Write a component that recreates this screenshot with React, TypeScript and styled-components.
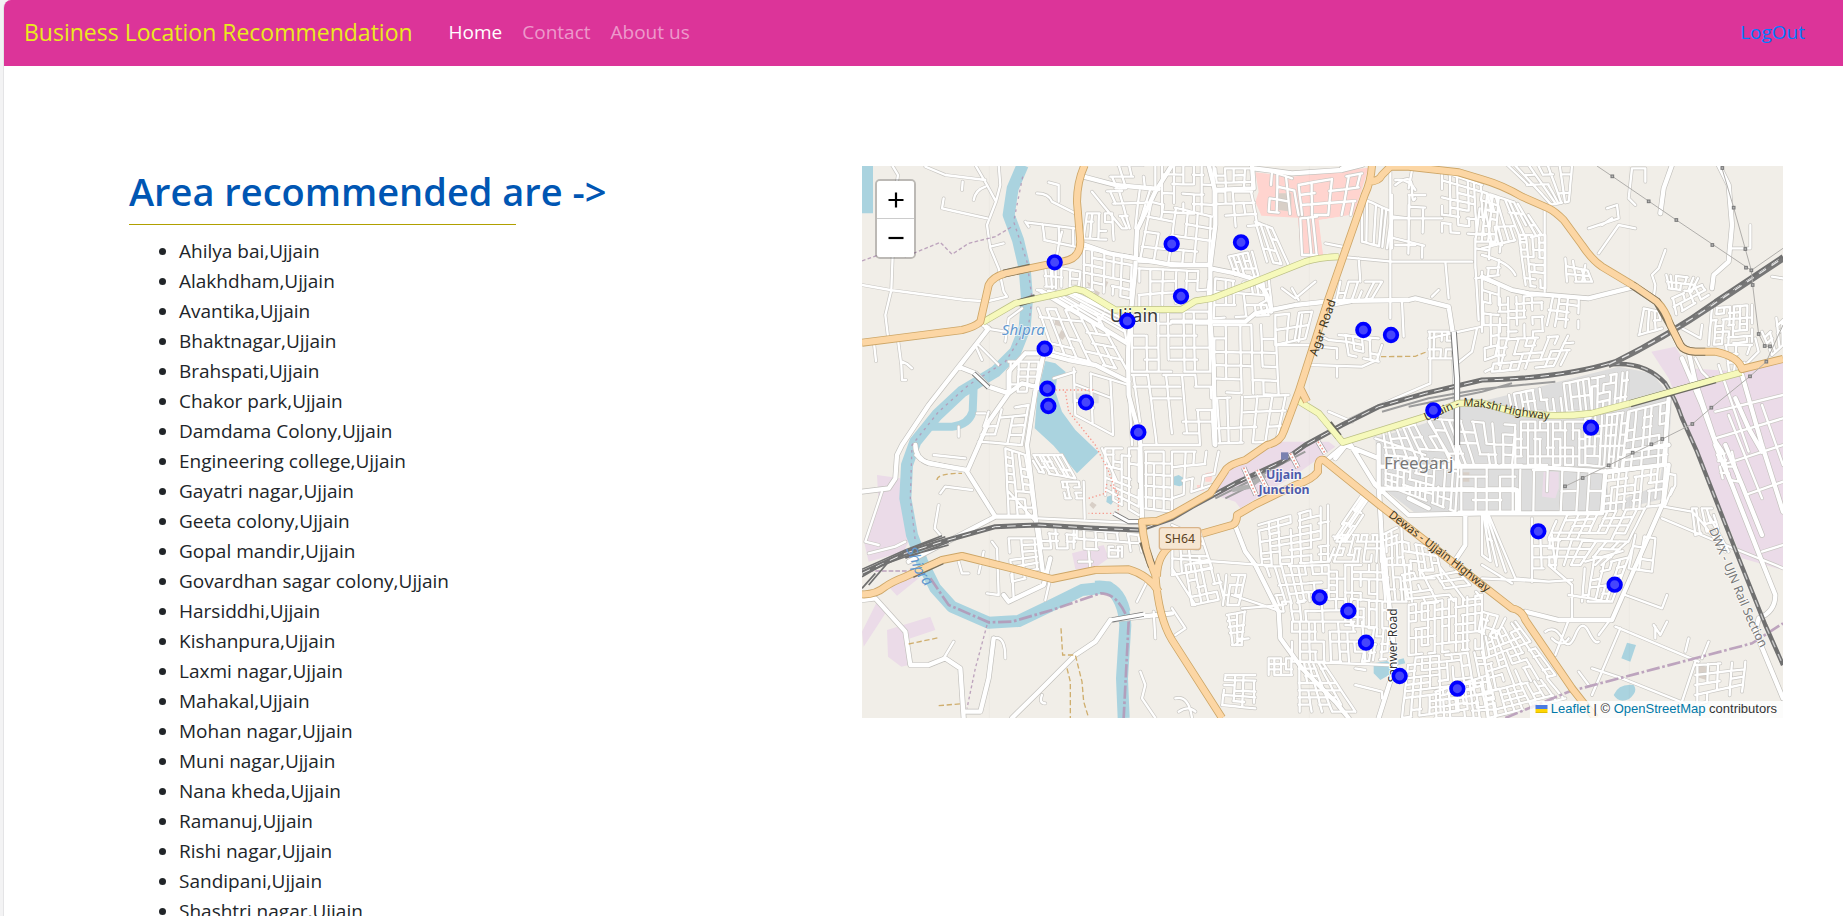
import React from "react";
import styled, { createGlobalStyle } from "styled-components";

const GlobalStyle = createGlobalStyle`
  *, *::before, *::after { box-sizing: border-box; }
  html { scrollbar-width: none; }
  body {
    margin: 0;
    background: #f3f3f4;
    color: #212529;
    font-family: "Open Sans", "Noto Sans", sans-serif;
    font-size: 19px;
    line-height: 30px;
  }
`;

const Page = styled.div`
  min-height: 100vh;
  margin-left: 3px;
  border-left: 1px solid #e4e4e6;
  border-top-left-radius: 8px;
  overflow: hidden;
  background: #fff;
`;

const Navbar = styled.nav`
  display: flex;
  align-items: center;
  min-height: 66px;
  padding: 0 38px 2px 20px;
  background: #dc3499;
`;

const Brand = styled.a`
  margin-right: 36px;
  color: #eaea1c;
  font-size: 23px;
  text-decoration: none;
  white-space: nowrap;
`;

const NavList = styled.ul`
  display: flex;
  flex: 1;
  gap: 20px;
  margin: 0;
  padding: 0;
  list-style: none;
`;

const NavLink = styled.a<{ $active?: boolean }>`
  color: ${(p) => (p.$active ? "#fff" : "rgba(255, 255, 255, 0.5)")};
  text-decoration: none;
  white-space: nowrap;
`;

const LogOut = styled.a`
  color: #007bff;
  text-decoration: none;
`;

const Content = styled.main`
  display: grid;
  grid-template-columns: 733fr 921fr;
  align-items: start;
  padding: 100px 60px 0 125px;
`;

const Title = styled.h1`
  margin: 0 0 8px;
  color: #0056b3;
  font-size: 38px;
  font-weight: 600;
  line-height: 50px;
`;

const Rule = styled.hr`
  width: 387px;
  max-width: 100%;
  height: 1px;
  margin: 0 0 11px;
  border: 0;
  background: #b0a000;
`;

const AreaList = styled.ul`
  margin: 0 0 20px;
  padding-left: 50px;
`;

const MapFrame = styled.section`
  position: relative;
  height: 552px;
  overflow: hidden;
  background: #f1eee8;
`;

const MapDrawing = styled.svg`
  display: block;
  width: 100%;
  height: 100%;
  font-family: "Noto Sans", "Open Sans", sans-serif;
`;

const ZoomControl = styled.div`
  position: absolute;
  top: 13px;
  left: 13px;
  display: flex;
  flex-direction: column;
  border: 2px solid rgba(0, 0, 0, 0.22);
  border-radius: 5px;
  background-clip: padding-box;
`;

const ZoomButton = styled.button`
  display: grid;
  place-items: center;
  width: 37px;
  height: 38px;
  padding: 0;
  border: 0;
  background: #fff;
  color: #000;
  &:first-child { border-bottom: 1px solid #ccc; border-radius: 3px 3px 0 0; }
  &:last-child { border-radius: 0 0 3px 3px; }
`;

const Attribution = styled.div`
  position: absolute;
  right: 0;
  bottom: 0;
  display: flex;
  align-items: center;
  gap: 3px;
  padding: 0 6px 1px 5px;
  background: rgba(255, 255, 255, 0.8);
  color: #333;
  font-family: "Liberation Sans", Arial, sans-serif;
  font-size: 13px;
  line-height: 16px;
  white-space: nowrap;
  a { color: #0078a8; text-decoration: none; }
`;

const areas = [
  "Ahilya bai", "Alakhdham", "Avantika", "Bhaktnagar", "Brahspati", "Chakor park",
  "Damdama Colony", "Engineering college", "Gayatri nagar", "Geeta colony",
  "Gopal mandir", "Govardhan sagar colony", "Harsiddhi", "Kishanpura",
  "Laxmi nagar", "Mahakal", "Mohan nagar", "Muni nagar", "Nana kheda",
  "Ramanuj", "Rishi nagar", "Sandipani", "Shashtri nagar",
];

const pins: [number, number][] = [
  [577, 291], [795, 467], [547, 550], [555, 670], [558, 722], [671, 711],
  [828, 801], [928, 236], [1136, 231], [956, 393], [1503, 494], [1586, 509],
  [1713, 735], [2186, 787], [1372, 1296], [1458, 1337], [1511, 1432],
  [1612, 1532], [1785, 1570], [2028, 1098], [2257, 1258],
];

/* A city block: four corners in order, then the number of streets each way. */
type Block = [number, number, number, number, number, number, number, number, number, number];

const blocks: Block[] = [
  [492, 172, 640, 190, 640, 245, 500, 215, 3, 1],
  [675, 145, 750, 145, 755, 225, 665, 220, 4, 3],
  [665, 250, 810, 275, 805, 400, 665, 370, 5, 5],
  [545, 300, 655, 320, 650, 365, 550, 365, 4, 2],
  [525, 375, 640, 385, 780, 450, 795, 540, 7, 3],
  [525, 430, 700, 440, 800, 620, 570, 560, 6, 5],
  [635, 610, 800, 660, 810, 840, 640, 750, 3, 3],
  [440, 590, 530, 590, 520, 680, 440, 680, 3, 4],
  [380, 740, 500, 720, 480, 840, 350, 830, 3, 4],
  [730, 0, 880, 0, 880, 70, 760, 70, 4, 2],
  [690, 80, 870, 75, 830, 190, 780, 190, 4, 3],
  [865, 110, 1050, 155, 1045, 300, 830, 290, 5, 4],
  [900, 0, 1055, 0, 1055, 150, 900, 140, 5, 5],
  [830, 310, 1045, 320, 1040, 400, 830, 430, 6, 3],
  [810, 440, 1040, 440, 1045, 620, 810, 620, 6, 5],
  [810, 630, 1045, 630, 1055, 840, 840, 840, 5, 6],
  [1060, 10, 1175, 10, 1170, 70, 1065, 75, 4, 3],
  [1060, 80, 1170, 80, 1190, 180, 1060, 190, 4, 3],
  [1100, 275, 1170, 260, 1190, 335, 1120, 330, 5, 3],
  [1060, 340, 1200, 360, 1220, 450, 1055, 460, 5, 3],
  [1180, 350, 1220, 340, 1230, 430, 1200, 450, 2, 3],
  [1055, 480, 1240, 480, 1250, 690, 1055, 680, 5, 5],
  [1060, 700, 1280, 690, 1250, 830, 1070, 835, 5, 3],
  [1180, 170, 1230, 190, 1280, 300, 1215, 290, 3, 3],
  [1240, 450, 1350, 440, 1330, 520, 1240, 540, 3, 2],
  [1230, 20, 1290, 40, 1310, 150, 1220, 140, 3, 3],
  [1310, 60, 1500, 25, 1470, 150, 1320, 150, 4, 3],
  [1315, 160, 1365, 155, 1380, 270, 1320, 270, 4, 1],
  [1500, 100, 1590, 140, 1575, 250, 1500, 230, 6, 1],
  [1590, 90, 1690, 90, 1685, 280, 1590, 250, 2, 5],
  [1740, 20, 1860, 60, 1870, 210, 1740, 200, 5, 7],
  [1860, 80, 1910, 100, 1900, 230, 1840, 230, 3, 6],
  [1435, 350, 1560, 350, 1530, 400, 1420, 420, 5, 2],
  [1450, 510, 1550, 530, 1550, 590, 1460, 570, 4, 3],
  [1700, 500, 1780, 500, 1770, 580, 1700, 580, 4, 3],
  [1840, 220, 1920, 240, 1910, 330, 1840, 340, 2, 4],
  [1860, 80, 1980, 120, 2040, 210, 1890, 240, 9, 3],
  [1930, 0, 2130, 0, 2120, 110, 2060, 120, 6, 4],
  [1970, 210, 2050, 210, 2050, 370, 1990, 360, 4, 7],
  [1860, 340, 1910, 360, 1910, 600, 1870, 620, 2, 8],
  [1910, 400, 2040, 390, 2045, 520, 1910, 520, 5, 6],
  [1910, 525, 2145, 510, 2100, 600, 1890, 620, 8, 4],
  [2070, 390, 2150, 400, 2150, 490, 2050, 480, 3, 4],
  [2110, 280, 2170, 300, 2190, 350, 2115, 350, 3, 3],
  [2410, 330, 2510, 340, 2490, 380, 2420, 370, 6, 2],
  [2430, 400, 2520, 360, 2540, 390, 2440, 450, 5, 2],
  [2345, 430, 2390, 440, 2400, 490, 2330, 510, 3, 2],
  [2550, 430, 2670, 420, 2670, 530, 2540, 540, 7, 6],
  [2590, 540, 2670, 540, 2640, 620, 2600, 620, 2, 3],
  [2700, 500, 2763, 440, 2763, 540, 2730, 570, 3, 4],
  [1940, 690, 2180, 640, 2190, 740, 1950, 740, 13, 2],
  [2190, 640, 2300, 620, 2290, 720, 2190, 740, 6, 4],
  [1960, 770, 2170, 770, 2170, 900, 1960, 900, 11, 5],
  [2170, 760, 2300, 740, 2280, 910, 2170, 900, 8, 5],
  [2300, 740, 2420, 710, 2415, 900, 2280, 915, 5, 6],
  [1560, 800, 1700, 770, 1780, 900, 1570, 870, 7, 3],
  [1700, 760, 1960, 780, 1950, 900, 1770, 900, 8, 4],
  [1570, 870, 1790, 890, 1780, 1040, 1570, 960, 12, 5],
  [1790, 900, 1960, 900, 1960, 1040, 1790, 1040, 4, 4],
  [1970, 915, 2230, 915, 2220, 1040, 1970, 1045, 6, 2],
  [2230, 925, 2410, 900, 2400, 1020, 2220, 1040, 8, 5],
  [2090, 1050, 2350, 1030, 2300, 1130, 2060, 1120, 9, 4],
  [2060, 1125, 2300, 1130, 2220, 1200, 2060, 1200, 7, 3],
  [2170, 1190, 2310, 1150, 2250, 1310, 2160, 1310, 5, 6],
  [1860, 1050, 1880, 1050, 1960, 1240, 1860, 1170, 4, 2],
  [2010, 1110, 2070, 1110, 2080, 1210, 2010, 1210, 2, 3],
  [2320, 1110, 2380, 1120, 2370, 1220, 2300, 1210, 2, 3],
  [2490, 1030, 2550, 1030, 2570, 1090, 2500, 1110, 4, 3],
  [730, 850, 830, 850, 830, 1050, 730, 990, 4, 8],
  [500, 870, 600, 870, 640, 940, 530, 920, 7, 3],
  [430, 850, 490, 870, 520, 1050, 440, 1050, 3, 8],
  [600, 950, 650, 950, 660, 1000, 610, 1000, 3, 3],
  [530, 1080, 640, 1090, 640, 1150, 540, 1150, 4, 3],
  [640, 1090, 830, 1110, 840, 1160, 640, 1150, 6, 2],
  [740, 1145, 780, 1145, 780, 1175, 740, 1175, 3, 1],
  [440, 1120, 520, 1120, 530, 1230, 450, 1250, 2, 6],
  [930, 860, 1070, 860, 1050, 960, 930, 1000, 4, 3],
  [850, 860, 930, 860, 930, 1040, 850, 1030, 3, 5],
  [930, 1080, 1020, 1120, 1050, 1210, 930, 1230, 4, 5],
  [970, 1200, 1060, 1180, 1090, 1300, 990, 1320, 4, 5],
  [1090, 1230, 1150, 1230, 1130, 1320, 1080, 1320, 3, 3],
  [1095, 1350, 1150, 1340, 1140, 1440, 1110, 1440, 2, 5],
  [1190, 1080, 1400, 1020, 1400, 1190, 1200, 1200, 7, 7],
  [1410, 1120, 1500, 990, 1530, 1010, 1450, 1130, 3, 5],
  [1430, 1110, 1560, 1110, 1560, 1190, 1400, 1190, 9, 4],
  [1560, 1110, 1620, 1080, 1625, 1200, 1560, 1200, 4, 5],
  [1210, 1205, 1400, 1200, 1400, 1300, 1250, 1320, 8, 4],
  [1400, 1200, 1570, 1200, 1570, 1310, 1400, 1300, 7, 5],
  [1260, 1310, 1450, 1300, 1450, 1370, 1270, 1370, 8, 2],
  [1450, 1300, 1580, 1310, 1580, 1390, 1450, 1380, 7, 3],
  [1290, 1370, 1500, 1370, 1510, 1490, 1290, 1490, 9, 4],
  [1520, 1390, 1590, 1390, 1590, 1480, 1500, 1490, 5, 4],
  [1560, 1200, 1640, 1200, 1650, 1310, 1570, 1310, 5, 3],
  [1620, 1130, 1720, 1150, 1740, 1240, 1630, 1240, 5, 4],
  [1620, 1230, 1770, 1200, 1860, 1300, 1640, 1320, 5, 5],
  [1640, 1320, 1860, 1290, 1860, 1450, 1640, 1470, 11, 6],
  [1640, 1480, 1860, 1460, 1900, 1620, 1620, 1659, 10, 9],
  [1310, 1490, 1380, 1490, 1480, 1640, 1310, 1640, 5, 7],
  [1220, 1480, 1290, 1480, 1290, 1530, 1220, 1530, 4, 3],
  [1090, 1530, 1180, 1530, 1180, 1630, 1080, 1620, 3, 6],
  [1860, 1420, 1960, 1370, 2080, 1530, 1880, 1580, 8, 8],
  [1870, 1580, 2060, 1540, 2110, 1600, 1880, 1659, 9, 4],
  [1720, 1580, 1880, 1530, 1900, 1659, 1720, 1659, 8, 5],
  [1860, 1340, 1930, 1360, 1900, 1420, 1850, 1400, 3, 3],
  [2500, 1500, 2650, 1490, 2640, 1580, 2500, 1620, 4, 4],
  [2565, 870, 2610, 860, 2630, 950, 2580, 940, 2, 4],
];

const noise = (n: number) => {
  const s = Math.sin(n * 12.9898) * 43758.5453;
  return s - Math.floor(s);
};

const blockPath = (b: Block, seed: number) => {
  const [x0, y0, x1, y1, x2, y2, x3, y3, nu, nv] = b;
  const at = (u: number, v: number) => {
    const x = (1 - v) * ((1 - u) * x0 + u * x1) + v * ((1 - u) * x3 + u * x2);
    const y = (1 - v) * ((1 - u) * y0 + u * y1) + v * ((1 - u) * y3 + u * y2);
    return `${Math.round(x)},${Math.round(y)}`;
  };
  let n = seed * 97 + 1;
  let d = "";
  for (let i = 0; i <= nu; i++) {
    const u = Math.min(1, Math.max(0, i / nu + (noise(n++) - 0.5) * (0.4 / nu)));
    for (let j = 0; j < nv; j++) {
      if (noise(n++) > 0.14) d += `M${at(u, j / nv)}L${at(u, (j + 1) / nv)}`;
    }
  }
  for (let j = 0; j <= nv; j++) {
    for (let i = 0; i < nu; i++) {
      if (noise(n++) > 0.38) d += `M${at(i / nu, j / nv)}L${at((i + 1) / nu, j / nv)}`;
    }
  }
  return d;
};

const blockStreets = blocks.map(blockPath).join("");

const laneStreets = [
  "M90,0 L108,30 105,50 M190,5 L250,30 370,45 M245,100 L240,130 275,138 375,160 M340,0 L375,60 402,110 375,180 385,250 410,310 425,380 435,395 380,408",
  "M410,0 L415,60 402,110 M300,75 L302,50 M335,105 Q340,75 370,65 M0,360 L85,375 310,405 360,408 M92,270 L88,375 70,450 78,515",
  "M36,535 L42,588 M108,525 L118,600 120,645 132,645 M120,590 L135,597 150,610 M385,245 L425,235 M560,52 L590,60 590,110 M525,85 Q560,85 570,110 L640,145 M490,170 L500,185",
  "M480,430 L440,460 430,530 M340,540 L360,585 M350,540 L410,600 M370,490 L430,500 M290,815 L290,785 M345,745 L370,745",
  "M575,640 L640,620 M580,300 L590,240 600,200 M565,300 L570,370 M580,280 L582,370",
  "M60,980 L10,1130 50,1140 M20,1165 L100,1145 130,1130 M215,870 L310,880 M330,975 L250,965 235,985 M230,1020 L218,1090 235,1110 M290,1190 L300,1225 320,1225 M350,1225 L365,1160",
  "M375,1285 L410,1290 405,1150 390,1130 M455,1300 L450,1200 M565,1240 L550,1305 M395,1420 Q430,1410 430,1480 M650,1190 L690,1190 M680,1160 L685,1210",
  "M245,1480 L275,1430 M540,1590 Q530,1615 550,1615 M835,1520 L850,1560 840,1600 880,1659 M825,1310 L860,1240 M875,1340 L880,1420 M160,870 L175,885 310,915",
  "M665,950 L668,1060 M720,850 L765,950 M530,1060 L840,1075 M440,980 L530,1080",
  "M1260,370 L1300,400 1360,350 M1290,370 L1310,405 M1390,235 L1440,245 M1430,510 L1550,520 M1320,450 L1310,530 M1240,540 L1340,540 M1370,510 L1400,525 1450,530",
  "M1370,545 L1425,550 1425,580 M1345,600 L1500,605 1545,585 1560,540 M1425,605 V635 M1460,765 L1600,700 1705,655 1705,585 M1400,740 L1470,770 M1620,410 L1625,515 M1585,10 V460 M1430,275 L1590,290 1830,290",
  "M1650,15 L1640,70 M1640,120 V220 M1680,160 H1740 M1590,160 H1680 M1660,240 H1600 M1700,520 L1860,485 M1750,290 L1760,400 M1840,300 L1850,465 M1490,280 L1495,350 M1860,320 V500",
  "M1600,60 Q1650,20 1650,70 T1660,100 M1600,45 Q1640,40 1660,75 M1780,600 L1830,560 1845,490 M1710,395 L1730,375",
  "M1860,250 L1960,225 M1860,270 Q1940,290 1960,330 M2048,120 V380 M2170,300 L2160,350 M2180,190 L2270,160 2265,120 2235,130 M2270,180 L2320,190 M2210,265 L2270,180 M2220,180 L2250,160",
  "M2310,10 L2300,100 2320,120 M2310,10 H2350 V50 M2410,255 L2390,310 2370,330 2380,360 2375,400 M2665,180 V250 H2610 M2730,335 L2763,340",
  "M2500,580 L2520,620 2550,650 M2650,600 L2690,560 2680,520 M2460,490 L2515,520 2520,480",
  "M2405,1025 L2490,1040 2510,1060 2590,1160 M2400,1060 L2590,1140 2740,1200 2763,1210 M2410,925 L2440,930 2440,960 2425,990 M2430,970 L2410,1020 M2540,1050 L2600,1160",
  "M2290,1290 L2400,1330 2415,1290 M2260,1385 L2510,1490 M2275,1390 L2190,1590 M2240,1370 L2210,1410 M2380,1385 V1420 M2375,1380 L2395,1410 2415,1370 M2480,1420 L2470,1460",
  "M2060,1200 L2130,1260 2130,1365 M1860,1240 L2060,1250 2130,1245 M2120,1290 L2250,1310 M2120,1365 L2080,1470 M1860,1200 L1950,1255 M1960,1240 L2060,1250 M2010,1060 V1250",
  "M2050,1400 Q2080,1380 2100,1420 T2140,1410 T2180,1400 T2210,1430 M2070,1420 Q2100,1450 2120,1420 M2150,1520 L2180,1560 M2190,1510 L2280,1540 2480,1620 M2500,1490 L2460,1610 M2540,1430 L2520,1480",
  "M930,1180 L1200,1200 M930,1210 L1000,1320 M1310,1490 L1580,1500 M1480,1560 L1560,1580 1560,1600 M1480,1510 L1510,1515 M1140,1330 L1260,1320 M1120,1440 Q1130,1420 1160,1420",
  "M930,1330 L970,1390 940,1410 M940,1600 Q980,1590 990,1659 M950,1640 Q980,1620 1000,1640 M1540,820 L1690,870 M1110,1290 L1260,1340",
  "M2560,820 L2763,760 M2560,740 L2763,690 M2580,900 L2763,840 M2650,990 L2763,950 M2700,1160 L2763,1140 M2600,750 L2700,1000 M2700,720 L2763,900 M2570,600 L2660,860",
].join(" ");

const mainStreets = [
  "M665,35 L760,60 890,72 M930,0 L880,80 825,195 820,310 808,430 798,560 800,690 830,800 835,840 840,1070",
  "M655,235 L740,265 930,300 1040,300 M545,565 L620,585 700,600 800,650 M1040,0 L1060,80 1060,180 1045,300 1045,470 1055,600 1060,840",
  "M0,980 L80,970 100,940 105,870 120,840 200,720 290,605 380,490 365,480 M290,605 L340,625 380,665 440,685 M490,565 L440,620 440,685 380,770 350,840 315,920 400,1055",
  "M545,565 L520,680 495,840 520,1050 545,1240 M440,685 L480,655 530,668 M160,840 Q160,880 200,895 L315,915 M490,565 H545",
  "M1045,310 L1120,325 1200,350 M1175,350 Q1220,370 1228,440 M930,470 L1150,470 1180,445 1300,420 1410,408 1640,405 1660,400 1760,425 1775,520 1785,840 1785,900",
  "M1170,0 L1175,70 1060,75 M1175,10 L1290,25 1440,15 1500,0",
  "M1115,1070 L1150,1160 1180,1200 1250,1340 1255,1420 1320,1510 1420,1610 1460,1659",
  "M1460,830 L1420,880 M1400,880 L1460,830 1540,960 1640,1050 1860,1045 2220,1045 2230,920 2405,900 2420,700",
  "M1550,840 L1550,960 1560,1130 1580,1300 1600,1500 1550,1659 M1550,905 L2010,905 2230,920 M1550,970 L1860,975 1965,975 1965,1045 M1455,842 L1550,880",
  "M2420,900 L2405,1010 2250,1365 M1990,1340 L2090,1365 2250,1365 M1810,1050 L1810,1140 1770,1200 M1860,335 L1950,375 2000,385 2180,400 2320,365",
  "M2430,0 L2405,70 2395,145 M2570,0 L2600,60 2610,180 2600,290 2555,330 2550,370 M2480,560 L2500,650 2560,830 2580,860",
  "M2560,840 L2610,960 2700,1190 2740,1290 Q2740,1340 2690,1360 L2680,1400 2763,1600 M2590,840 L2640,960 2700,1110",
  "M2460,580 L2520,720 2570,860 M2620,700 L2660,790 2700,860 M2640,630 L2700,840 2763,1040",
  "M0,1305 L40,1300 130,1400 145,1500 200,1500 250,1480 295,1510 305,1659 M305,1640 H355 L380,1540 395,1420 M450,1659 L530,1580 640,1470 700,1430 745,1365 930,1345",
  "M1480,0 L1440,10 M2290,860 L2420,840 M425,1290 L440,1310 545,1260 565,1180 M140,1190 L400,1055 520,1055 M1640,1000 L1700,1030",
].join(" ");

const primaryRoads = [
  "M0,533 L300,495 Q340,485 355,470 L380,360 Q392,335 430,325 L600,290 Q655,283 655,230 L645,110 Q645,50 668,0",
  "M1530,0 Q1527,50 1508,90 L1400,400 1310,680 1265,800 Q1255,832 1215,840 L1150,885 Q1095,900 1088,920 L1045,985 930,1050 885,1068 840,1070 Q845,1150 880,1230 Q890,1360 930,1425 L1080,1659",
  "M1520,50 Q1550,50 1560,30 L1585,5 1640,5 1790,22 1860,43 Q1920,60 1980,95 L2060,130 Q2080,140 2105,165 L2160,240 Q2190,285 2220,305 L2320,365 2385,410 Q2410,435 2425,480 L2455,540 Q2465,558 2500,560 L2560,560 Q2630,575 2640,612 L2763,582",
  "M885,1235 Q885,1170 930,1140 M1020,1106 L1110,1080 Q1125,1075 1125,1050 L1180,1018 1300,960 Q1350,945 1368,920 Q1365,880 1385,885 L1550,1018 1860,1260 1950,1330 Q1980,1335 1990,1365 L2130,1570 2200,1659",
  "M0,1288 Q40,1290 70,1265 Q90,1250 130,1235 L240,1185 300,1173 450,1210 570,1242 700,1215 800,1213 Q860,1230 890,1280",
  "M1315,670 L1335,710",
].join(" ");

const secondaryRoads = [
  "M362,472 L460,415 610,382 640,372 665,378 760,435 960,433 1000,408 1050,400 1180,350 1330,290 Q1370,277 1430,275",
  "M1305,705 L1370,745 1442,832 1680,758 1790,715 1860,714 1960,742 Q2070,760 2190,745 L2305,715 2560,643 2638,622",
].join(" ");

const mainRail =
  "M0,1225 L130,1165 240,1130 400,1085 530,1080 700,1090 830,1095 930,1060 990,1025 1120,955 1260,890 1330,840 1440,780 1550,725 1690,685 1860,645 Q2100,640 2260,590 Q2420,510 2560,410 L2763,275";
const eastRail =
  "M2250,598 Q2350,590 2410,655 Q2440,700 2460,760 L2505,860 2630,1180 2710,1380 2763,1500";

const river =
  "M482,0 L452,70 440,150 468,225 488,310 495,400 488,490 460,560 400,620 300,680 225,750 160,830 135,900 130,1000 150,1110 180,1190 220,1270 270,1325 380,1373 470,1368 570,1320 660,1275 740,1267 Q785,1300 790,1380 L780,1540 785,1659";

const tileSeams = "M382,3 V1659 M1342,3 V1659 M2302,3 V1659";

const footbridges = "M1145,908 L1182,990 M1185,915 L1215,970 M1285,865 L1308,908 M1368,830 L1390,866";

const pylons: [number, number][] = [
  [2251, 34], [2360, 109], [2443, 165], [2551, 240], [2652, 308], [2668, 316], [2581, 9], [2615, 128],
  [2650, 252], [2672, 360], [2690, 507], [2708, 543], [2724, 544], [2713, 590], [2664, 634], [2548, 728],
  [2491, 777], [2401, 822], [2368, 838], [2312, 863], [2240, 901], [2162, 939], [2109, 964],
];

const CityMap = () => (
  <MapDrawing viewBox="0 3 2763 1656" preserveAspectRatio="xMidYMid slice" role="img" aria-label="Map of Ujjain">
    <defs>
      <path id="agar" d="M1365,575 L1430,385" />
      <path id="makshi" d="M1692,768 L1800,722 1870,728 1960,750 2090,768" />
      <path id="dewas" d="M1578,1054 L1780,1208 1920,1320" />
      <path id="sanwer" d="M1604,1552 V1320" />
      <path id="shipra" d="M133,1152 L160,1225 230,1320" />
      <path id="dwx" d="M2540,1094 L2610,1260 2660,1380 2740,1540" />
    </defs>

    <rect x="0" y="0" width="2763" height="1662" fill="#f1eee8" />

    <g fill="#ebdbe8">
      <path d="M45,930 L115,940 125,1000 145,1120 125,1160 20,1190 5,1125 50,1020Z M80,1265 L140,1230 170,1240 105,1292Z M0,1400 L45,1310 80,1330 5,1445Z M75,1395 L205,1355 220,1395 130,1425 140,1500 118,1505 78,1475Z" />
      <path d="M630,1165 L725,1140 740,1180 690,1215 640,1212Z M1040,985 L1100,915 1260,830 1400,830 1420,845 1300,930 1135,1030 1120,1010Z" />
      <path d="M2368,560 L2440,545 2480,610 2640,620 2763,590 2763,1215 2640,1180 2510,870 2420,640Z" />
    </g>
    <g fill="#dddddd">
      <path d="M1540,820 L1690,775 1790,725 1960,685 2090,650 2270,605 2370,625 2430,700 2412,1000 2220,1045 1860,1050 1660,1045 1550,960Z" />
      <path d="M630,685 h80 v30 h-80z" />
    </g>
    <path fill="#f1eee8" d="M2235,930 L2400,905 2390,960 2240,1020Z" />
    <path fill="#ebdbe8" d="M2045,920 H2090 V970 L2080,1000 2040,995Z" />
    <path fill="#ffd4cf" d="M1180,22 L1290,35 1520,8 1475,150 1370,165 1383,272 1318,272 1308,158 1198,152 1180,110 1190,80Z M1030,925 L1052,920 1048,950 1030,950Z M1005,960 h20 v18 h-20z" />
    <path fill="#ffd4cf" d="M1367,160 L1383,272 H1318 L1308,158Z" />
    <path fill="#f1eee8" d="M1375,165 L1475,148 1440,240 1385,250Z" />
    <g fill="#d8cfc7">
      <path d="M1242,85 h46 v55 l-38,-5z M1800,922 h22 v28 h-22z M2510,1500 l35,8 -10,38 -38,-12z M690,1010 l14,10 -10,12 -12,-12z" />
      <path d="M675,350 l12,6 -6,10z M700,375 l14,8 -8,14 -12,-6z M725,345 l14,6 -8,18z M580,455 l26,8 -8,22 -20,-6z M598,495 l16,12 -12,18 -14,-10z" />
    </g>

    <g fill="none" stroke="#aad3df" strokeLinejoin="round">
      <path d={river} strokeWidth="36" />
      <path d="M335,665 L332,740 Q320,780 270,785 L190,785" strokeWidth="24" />
      <path d="M700,1263 Q770,1255 790,1340" strokeWidth="32" />
    </g>
    <path fill="#aad3df" d="M0,0 H33 V145 H0Z M550,588 L580,595 612,622 585,638 580,680 600,740 640,795 710,862 645,925 575,842 518,790 525,700 540,630Z M735,995 l18,-6 6,14 -12,16 -14,-8z M935,935 l15,-5 20,12 2,16 -20,6 -16,-4z" />
    <path fill="#aad3df" d="M1535,1495 L1575,1488 1595,1500 1590,1525 1555,1545 1535,1525Z M1605,1485 L1625,1480 1630,1495 1608,1500Z M2295,1433 L2322,1440 2305,1490 2278,1480Z M2255,1590 Q2270,1555 2315,1560 Q2330,1580 2300,1603 Q2270,1615 2255,1590Z" />

    <g fill="none" strokeLinejoin="round" strokeLinecap="round">
      <path d={blockStreets + laneStreets} stroke="#c9c7c3" strokeWidth="11" />
      <path d={mainStreets} stroke="#c2c0bc" strokeWidth="17" />
      <path d={blockStreets + laneStreets} stroke="#ffffff" strokeWidth="7" />
      <path d={mainStreets} stroke="#ffffff" strokeWidth="13" />
    </g>

    <g fill="none" stroke="#b497b6" strokeWidth="4" opacity="0.85">
      <path d="M0,288 L70,262 130,275 235,232 270,268 320,235 400,215 450,185" strokeDasharray="11 7" />
      <path d="M482,35 L455,170 495,290 510,400 500,480 430,590 320,660 230,740 150,840 145,1000 160,1130" strokeDasharray="8 12" />
      <path d="M375,1380 L340,1510 315,1630" strokeDasharray="9 8" />
      <path d="M0,1218 H160" strokeDasharray="14 6" />
      <path d="M205,1240 L260,1320 380,1372 450,1370 570,1335 715,1285 Q770,1285 800,1370 L785,1659" strokeWidth="8" strokeDasharray="40 8 8 8" />
      <path d="M1930,1659 L2120,1580 2480,1485 2670,1435 2763,1375" strokeWidth="8" strokeDasharray="40 8 8 8" />
    </g>
    <g fill="none" stroke="#cfae6e" strokeWidth="4" strokeDasharray="16 8">
      <path d="M140,1437 L230,1418 M230,1622 L300,1616 M597,1390 L602,1470 H640 L660,1550 665,1610 680,1659 M615,1510 L625,1550 V1659 M225,945 Q225,925 300,925 M1557,575 L1660,574 1695,560" />
    </g>
    <g fill="none" stroke="#f7978a" strokeWidth="4" strokeDasharray="4 7">
      <path d="M580,675 H700 M610,680 L620,740 700,840 740,920 770,1000 768,1045 H680 M680,1000 L730,985 735,950 M745,960 L770,985" />
    </g>

    <g fill="none" strokeLinejoin="round">
      <path d="M1060,1000 L1200,930 1280,885 M1090,1000 L1180,955 M1130,965 L1330,860 M1560,740 L1700,700 1860,672 2080,650 M1640,725 L1860,680 1950,655" stroke="#9c9c9c" strokeWidth="6" />
      <path d="M1110,975 L1160,965 1210,930" stroke="#b0b0b0" strokeWidth="14" />
      <path d={mainRail} stroke="#707070" strokeWidth="15" />
      <path d={mainRail} stroke="#ededed" strokeWidth="3" strokeDasharray="26 20" />
      <path d={eastRail} stroke="#707070" strokeWidth="13" />
      <path d={eastRail} stroke="#c9c9c9" strokeWidth="4" strokeDasharray="22 22" />
      <path d="M2240,603 Q2410,520 2560,418 L2763,284" stroke="#777" strokeWidth="13" />
      <path d="M2240,598 Q2410,518 2560,414 L2763,279" stroke="#e4e4e4" strokeWidth="4" strokeDasharray="24 20" />
      <path d="M0,1235 L60,1200 130,1175 260,1140 M20,1260 L80,1190 M0,1213 L130,1155 240,1112 M120,1160 L250,1115 M130,1180 L260,1132 M0,1270 L40,1225" stroke="#707070" strokeWidth="5" />
      <path d="M1775,500 L1785,640 V840" stroke="#777" strokeWidth="19" />
      <path d="M1775,500 L1785,640 V840" stroke="#fff" strokeWidth="13" />
      <path d="M750,1365 L845,1348 M755,1045 L800,1070 835,1070 M335,625 L380,668" stroke="#777" strokeWidth="15" />
      <path d="M745,1365 L850,1347 M755,1045 L800,1070 835,1070 M335,625 L380,668" stroke="#fff" strokeWidth="10" />
    </g>

    <g fill="none" strokeLinejoin="round">
      <path d={secondaryRoads} stroke="#bcc086" strokeWidth="21" />
      <path d="M470,414 L520,398 M2305,716 L2560,644 M1400,775 L1430,815" stroke="#6b6b60" strokeWidth="22" />
      <path d={secondaryRoads} stroke="#f6f9bb" strokeWidth="17" />
      <path d={primaryRoads} stroke="#cda667" strokeWidth="24" />
      <path d="M425,326 L505,308 M2310,360 L2385,410 2425,480 2455,540 Q2465,558 2500,560 L2530,560 M843,1130 L870,1205 M150,1228 L240,1187" stroke="#7d715a" strokeWidth="24" />
      <path d={primaryRoads} stroke="#fcd6a4" strokeWidth="19" />
    </g>

    <g fill="none">
      <path d={footbridges} stroke="#999" strokeWidth="16" />
      <path d={footbridges} stroke="#fff" strokeWidth="12" />
      <path d={footbridges} stroke="#f29a8e" strokeWidth="5" strokeDasharray="5 6" />
    </g>

    <path d="M2205,3 L2251,34 2443,165 2668,316 2763,250 M2578,3 L2615,128 2650,252 2668,316 2672,360 2690,507 2708,543 2724,544 M2763,480 L2713,590 2664,634 2548,728 2491,777 2401,822 2240,901 2109,964" fill="none" stroke="#b0aeab" strokeWidth="3" />
    {pylons.map(([x, y]) => (
      <rect key={`${x}-${y}`} x={x - 4} y={y - 4} width="8" height="8" fill="#b5b5b5" stroke="#777" strokeWidth="3" />
    ))}
    <path d={tileSeams} stroke="#000" strokeOpacity="0.04" strokeWidth="2" fill="none" />

    <rect x="892" y="1088" width="124" height="65" rx="8" fill="#f6e6d2" stroke="#d9b48a" strokeWidth="4" />
    <rect x="1257" y="862" width="22" height="22" fill="#7981b0" />

    <g stroke="#fff" strokeOpacity="0.65" strokeWidth="6" paintOrder="stroke" strokeLinejoin="round" textAnchor="middle">
      <text x="484" y="510" fontSize="45" fontStyle="italic" fill="#5f97cf">Shipra</text>
      <text x="816" y="471" fontSize="54" fill="#3a3a3a">Ujjain</text>
      <text x="1670" y="912" fontSize="51" fill="#777">Freeganj</text>
      <text x="1266" y="941" fontSize="37" fontWeight="700" fill="#4d5bab">Ujjain</text>
      <text x="1266" y="986" fontSize="37" fontWeight="700" fill="#4d5bab">Junction</text>
    </g>
    <text x="954" y="1133" fontSize="37" fill="#5a4223" textAnchor="middle">SH64</text>
    <g fontSize="34" fill="#3d3520">
      <text fontSize="36"><textPath href="#agar">Agar Road</textPath></text>
      <text><textPath href="#makshi">Ujjain - Makshi Highway</textPath></text>
      <text><textPath href="#dewas">Dewas - Ujjain Highway</textPath></text>
      <text fontSize="36" stroke="#fff" strokeWidth="6" paintOrder="stroke" fill="#333"><textPath href="#sanwer">Sanwer Road</textPath></text>
      <text fontSize="45" fontStyle="italic" fill="#5f97cf"><textPath href="#shipra">Shipra</textPath></text>
      <text fontSize="37" fill="#777" stroke="#fff" strokeOpacity="0.6" strokeWidth="5" paintOrder="stroke"><textPath href="#dwx">DWX - UJN Rail Section</textPath></text>
    </g>

    <g fill="#4646fb" stroke="#0000ff" strokeWidth="11">
      {pins.map(([x, y]) => (
        <circle key={`${x}-${y}`} cx={x + 1} cy={y + 1} r="19" />
      ))}
    </g>
  </MapDrawing>
);

export default function App() {
  return (
    <>
      <GlobalStyle />
      <Page>
        <Navbar>
          <Brand href="#">Business Location Recommendation</Brand>
          <NavList>
            <li><NavLink href="#home" $active>Home</NavLink></li>
            <li><NavLink href="#contact">Contact</NavLink></li>
            <li><NavLink href="#about">About us</NavLink></li>
          </NavList>
          <LogOut href="#logout">LogOut</LogOut>
        </Navbar>
        <Content>
          <section>
            <Title>Area recommended are -&gt;</Title>
            <Rule />
            <AreaList>
              {areas.map((a) => (
                <li key={a}>{a},Ujjain</li>
              ))}
            </AreaList>
          </section>
          <MapFrame>
            <CityMap />
            <ZoomControl>
              <ZoomButton type="button" aria-label="Zoom in">
                <svg width="16" height="16" viewBox="0 0 16 16"><path d="M8 0.5v15M0.5 8h15" stroke="#000" strokeWidth="2.2" /></svg>
              </ZoomButton>
              <ZoomButton type="button" aria-label="Zoom out">
                <svg width="16" height="16" viewBox="0 0 16 16"><path d="M0.5 8h15" stroke="#000" strokeWidth="2.2" /></svg>
              </ZoomButton>
            </ZoomControl>
            <Attribution>
              <svg width="13" height="8" viewBox="0 0 12 8" aria-hidden="true">
                <path fill="#4C7BE1" d="M0 0h12v4H0z" />
                <path fill="#FFD500" d="M0 4h12v3H0z" />
                <path fill="#E0BC00" d="M0 7h12v1H0z" />
              </svg>
              <span>
                <a href="#leaflet">Leaflet</a> | © <a href="#osm">OpenStreetMap</a> contributors
              </span>
            </Attribution>
          </MapFrame>
        </Content>
      </Page>
    </>
  );
}
